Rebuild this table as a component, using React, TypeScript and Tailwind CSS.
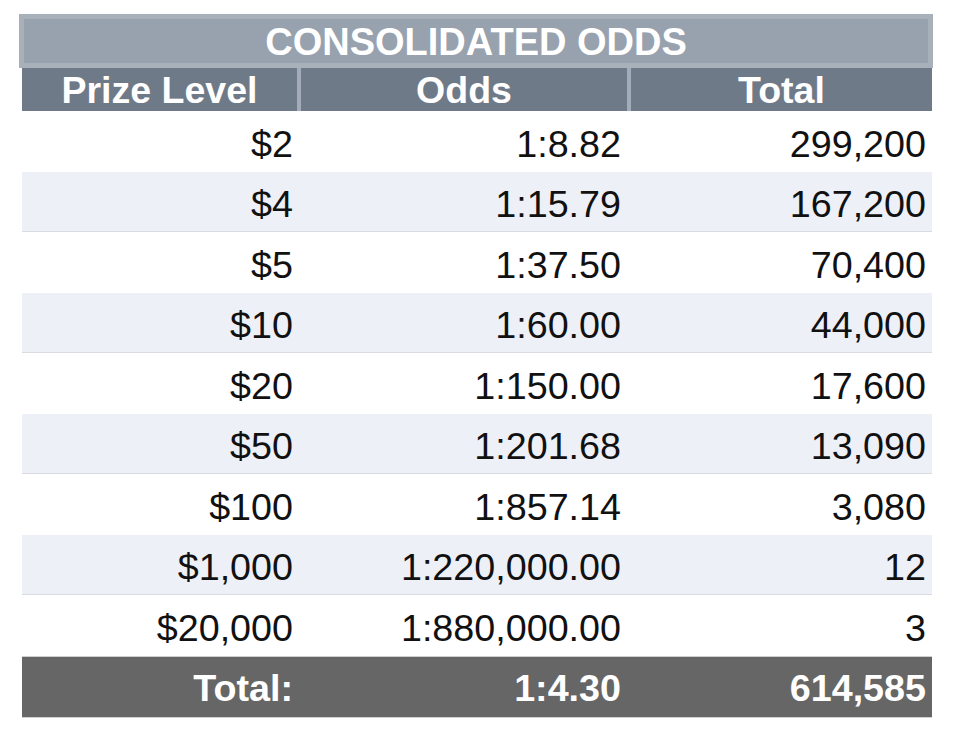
import React from "react"

const rows = [
  { prize: "$2", odds: "1:8.82", total: "299,200" },
  { prize: "$4", odds: "1:15.79", total: "167,200" },
  { prize: "$5", odds: "1:37.50", total: "70,400" },
  { prize: "$10", odds: "1:60.00", total: "44,000" },
  { prize: "$20", odds: "1:150.00", total: "17,600" },
  { prize: "$50", odds: "1:201.68", total: "13,090" },
  { prize: "$100", odds: "1:857.14", total: "3,080" },
  { prize: "$1,000", odds: "1:220,000.00", total: "12" },
  { prize: "$20,000", odds: "1:880,000.00", total: "3" },
]

const cols = "grid grid-cols-[275px_326px_301px] gap-x-[4px]"

export default function App() {
  return (
    <div className="min-h-[730px] w-[954px] bg-white pt-[14px] pl-[22px] font-['Liberation_Sans',Arial,sans-serif]">
      <div className="w-[910px]">
        {/* Title */}
        <div className="-ml-[3px] flex h-[54px] w-[914px] items-center justify-center border-[5px] border-[#a8b0ba] bg-[#98a2ae] pt-[2px] text-[38px] font-bold leading-none text-white">
          CONSOLIDATED ODDS
        </div>

        {/* Column headers */}
        <div className={`${cols} h-[43px] bg-[#a3acb8] text-[37.5px] font-bold leading-none text-white`}>
          <div className="flex items-center justify-center bg-[#6f7a88] pt-[3px]">Prize Level</div>
          <div className="flex items-center justify-center bg-[#6f7a88] pt-[3px]">Odds</div>
          <div className="flex items-center justify-center bg-[#6f7a88] pt-[3px]">Total</div>
        </div>

        {/* Data rows */}
        {rows.map((r, i) => (
          <div
            key={r.prize}
            className={`${cols} h-[60.5px] text-[37.7px] leading-none text-[#111] ${
              i % 2 === 1 ? "border-b border-[#d9dbe1] bg-[#eef0f7]" : "bg-white"
            }`}
          >
            <div className="flex items-center justify-end pt-[7px] pr-[4px]">{r.prize}</div>
            <div className="flex items-center justify-end pt-[7px] pr-[6px]">{r.odds}</div>
            <div className="flex items-center justify-end pt-[7px] pr-[6px]">{r.total}</div>
          </div>
        ))}

        {/* Total */}
        <div className={`${cols} h-[62px] border-y border-[#cfcfcf] bg-[#666666] text-[37.7px] font-bold leading-none text-white`}>
          <div className="flex items-center justify-end pt-[5px] pr-[4px]">Total:</div>
          <div className="flex items-center justify-end pt-[5px] pr-[6px]">1:4.30</div>
          <div className="flex items-center justify-end pt-[5px] pr-[6px]">614,585</div>
        </div>
      </div>
    </div>
  )
}
